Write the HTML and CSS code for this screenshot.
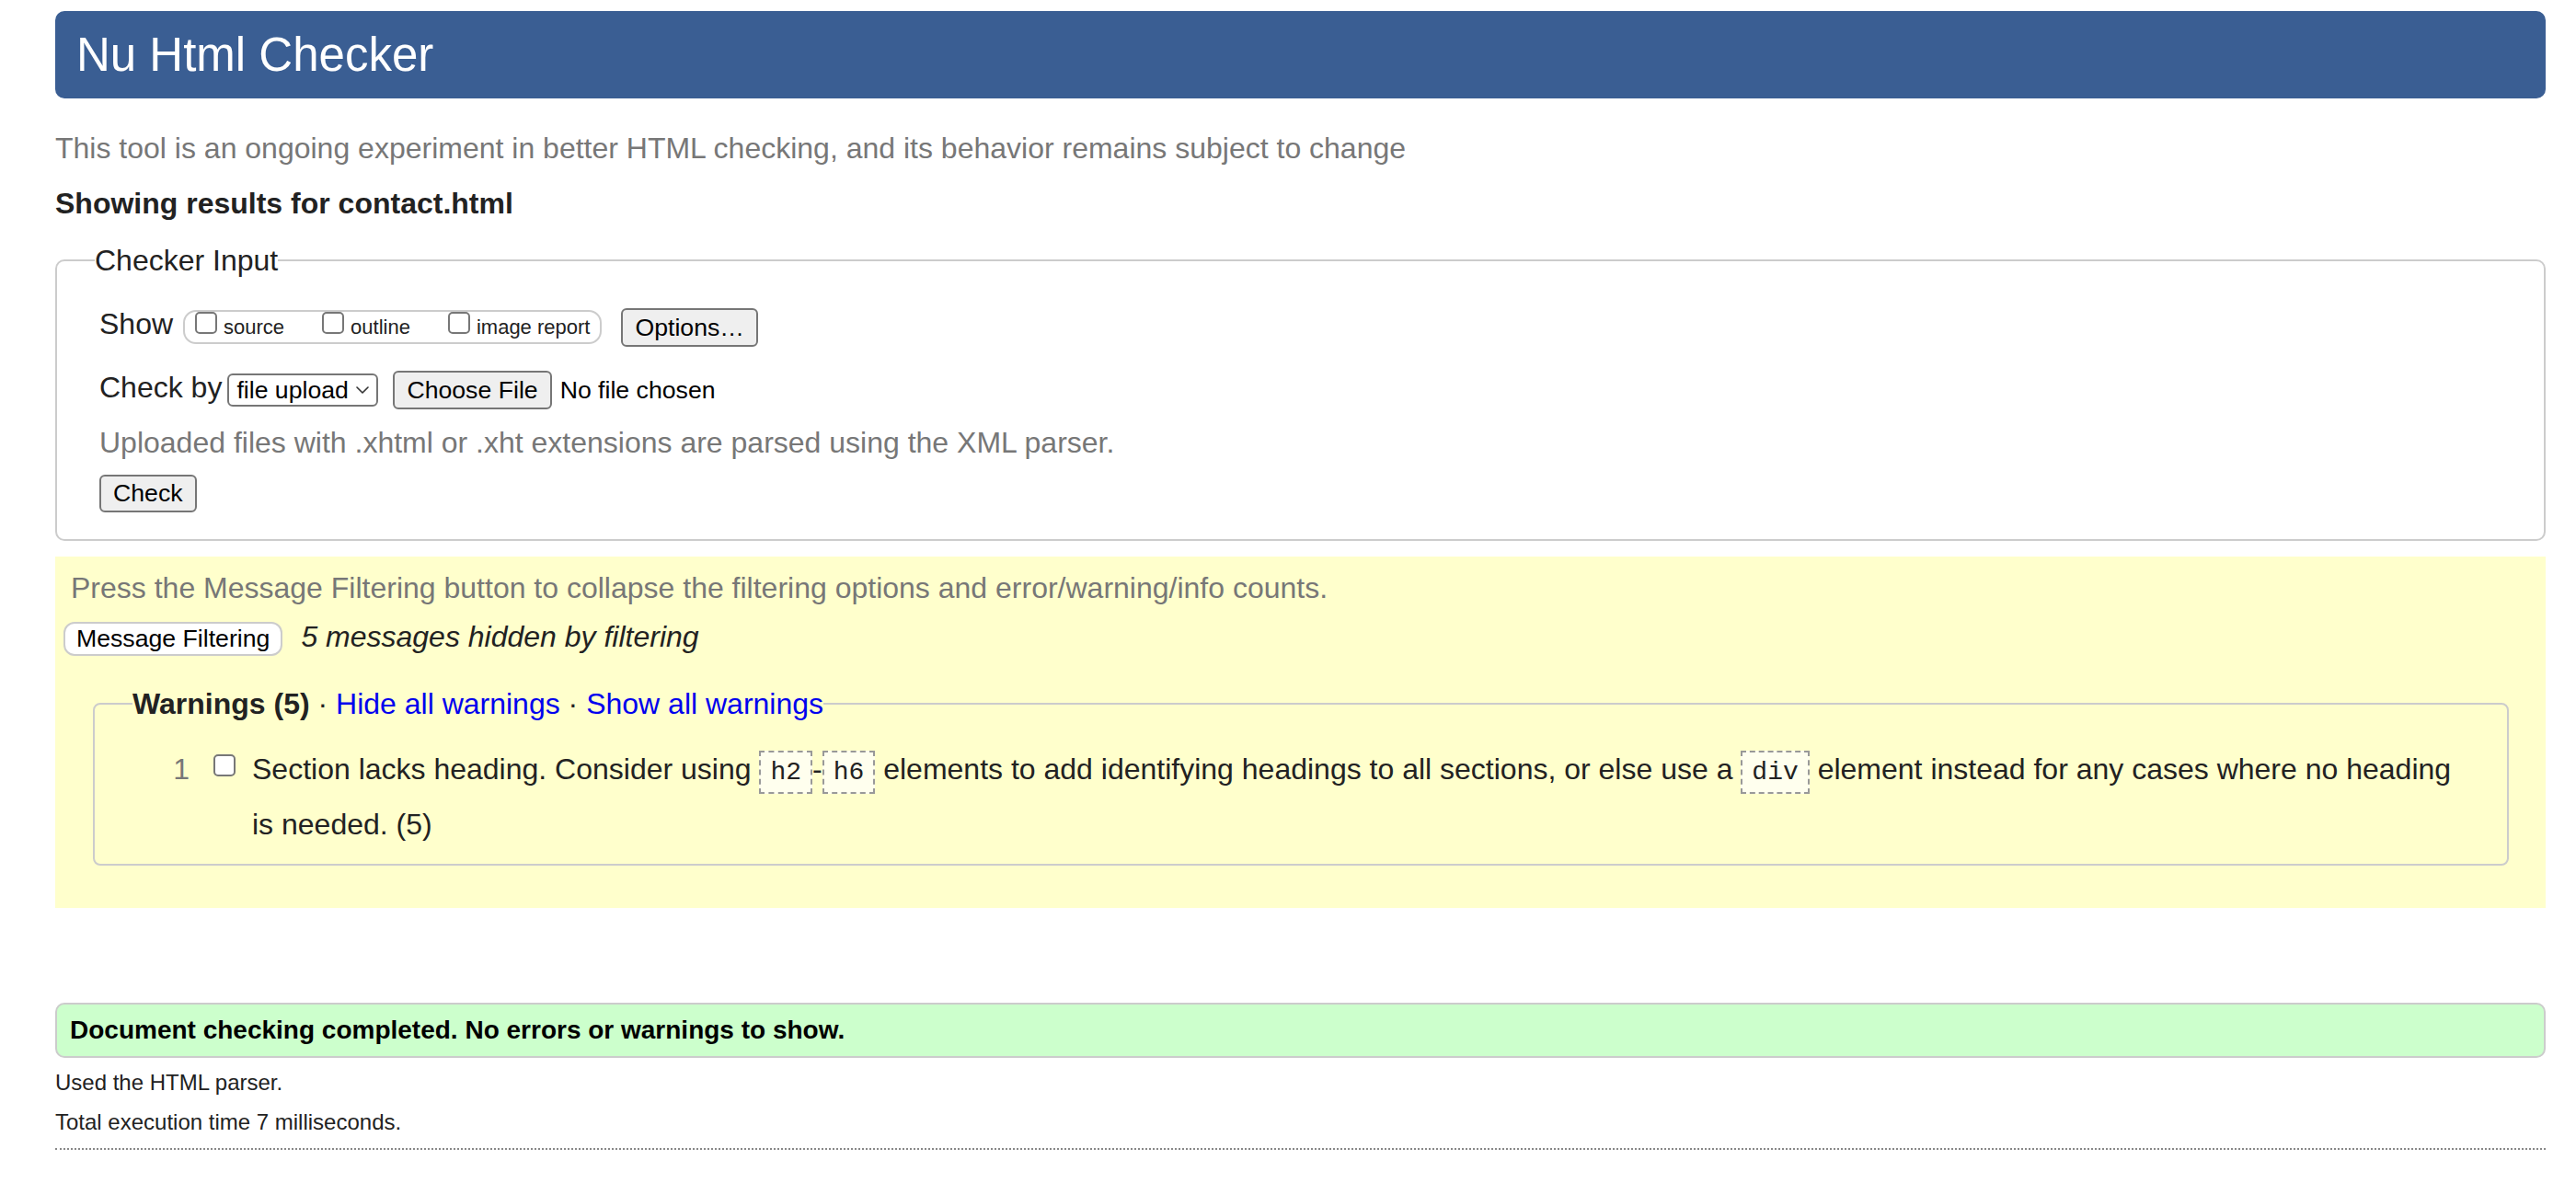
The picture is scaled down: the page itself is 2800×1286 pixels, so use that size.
FILE: index.html
```html
<!DOCTYPE html>
<html lang="en">
<head>
<meta charset="utf-8">
<title>Nu Html Checker</title>
<link rel="stylesheet" href="styles.css">
</head>
<body>
<h1 class="title">Nu Html Checker</h1>
<p class="intro">This tool is an ongoing experiment in better HTML checking, and its behavior remains subject to change</p>
<p class="results-for">Showing results for contact.html</p>
<form class="checker-form">
  <fieldset class="input-box">
    <legend class="input-legend">Checker Input</legend>
    <div class="input-body">
      <div class="row row-show">
        <span class="row-label label-show">Show</span>
        <span class="show-group">
          <label class="opt"><input type="checkbox" class="cb"><span class="opt-text">source</span></label>
          <label class="opt"><input type="checkbox" class="cb"><span class="opt-text">outline</span></label>
          <label class="opt"><input type="checkbox" class="cb"><span class="opt-text">image report</span></label>
        </span>
        <button type="button" class="btn btn-options">Options…</button>
      </div>
      <div class="row row-checkby">
        <span class="row-label label-checkby">Check by</span>
        <span class="select-wrap">
          <select class="select"><option>file upload</option></select>
          <svg class="chev" viewBox="0 0 14 8" width="14" height="8"><path d="M1 1 L7 7 L13 1" fill="none" stroke="#333" stroke-width="1.6" stroke-linecap="round" stroke-linejoin="round"/></svg>
        </span>
        <button type="button" class="btn btn-file">Choose File</button>
        <span class="file-status">No file chosen</span>
      </div>
      <p class="hint">Uploaded files with .xhtml or .xht extensions are parsed using the XML parser.</p>
      <button type="button" class="btn btn-check">Check</button>
    </div>
  </fieldset>
</form>
<section class="filters">
  <p class="filter-hint">Press the Message Filtering button to collapse the filtering options and error/warning/info counts.</p>
  <div class="filter-row">
    <button type="button" class="btn-filter">Message Filtering</button>
    <em class="hidden-count">5 messages hidden by filtering</em>
  </div>
  <fieldset class="warn-box">
    <legend class="warn-legend"><strong>Warnings (5)</strong> · <a href="#" class="warn-link">Hide all warnings</a> · <a href="#" class="warn-link">Show all warnings</a></legend>
    <ol class="warn-list">
      <li class="warn-item"><span class="warn-num">1</span><input type="checkbox" class="cb warn-cb"><span class="warn-text">Section lacks heading. Consider using <code class="code">h2</code>-<code class="code">h6</code> elements to add identifying headings to all sections, or else use a <code class="code">div</code> element instead for any cases where no heading is needed. (5)</span></li>
    </ol>
  </fieldset>
</section>
<div class="success">Document checking completed. No errors or warnings to show.</div>
<p class="meta meta-first">Used the HTML parser.</p>
<p class="meta">Total execution time 7 milliseconds.</p>
<hr class="end-rule">
</body>
</html>
```

FILE: styles.css
```css
html {
  background: #fff;
}

body {
  margin: 0 33px 0 60px;
  font-family: "Liberation Sans", Arial, Helvetica, sans-serif;
  font-size: 32px;
  line-height: 40px;
  color: #222;
}

.title {
  margin: 12px 0 0;
  height: 95px;
  box-sizing: border-box;
  padding: 0 23px;
  background: #3a5e93;
  color: #fff;
  font-size: 51px;
  font-weight: normal;
  line-height: 95px;
  border-radius: 10px;
}

.intro {
  margin: 34px 0 0;
  color: #777;
}

.results-for {
  margin: 20px 0 0;
  font-weight: bold;
}

.checker-form {
  margin: 0;
}

.input-box {
  margin: 22px 0 0;
  min-width: 0;
  border: 2px solid #ccc;
  border-radius: 10px;
  padding: 32px 0 29px 41px;
}

.input-legend {
  padding: 0;
  font-size: 32px;
  line-height: 40px;
  color: #222;
}

.input-body {
  padding-left: 5px;
}

.row {
  display: flex;
  align-items: flex-start;
}

.row-label {
  flex: none;
}

.label-show {
  margin-top: -3px;
}

.show-group {
  display: flex;
  align-items: flex-start;
  height: 37px;
  box-sizing: border-box;
  border: 2px solid #ccc;
  border-radius: 14px;
  padding: 0 11px;
  margin: 2px 0 0 11px;
}

.opt {
  display: flex;
  align-items: flex-start;
  font-size: 22px;
  line-height: 26px;
  color: #222;
}

.opt + .opt {
  margin-left: 41px;
}

.cb {
  appearance: none;
  -webkit-appearance: none;
  flex: none;
  width: 24px;
  height: 24px;
  margin: 0;
  box-sizing: border-box;
  border: 2px solid #777;
  border-radius: 5px;
  background: #fff;
}

.opt-text {
  margin: 4px 0 0 7px;
}

.btn {
  display: inline-block;
  height: 42px;
  box-sizing: border-box;
  padding: 0 13px;
  border: 2px solid #767676;
  border-radius: 6px;
  background: #efefef;
  color: #000;
  font-family: "Liberation Sans", Arial, Helvetica, sans-serif;
  font-size: 26.67px;
  line-height: 1;
}

.btn-options {
  margin-left: 21px;
}

.row-checkby {
  margin-top: 26px;
}

.label-checkby {
  margin-top: -2px;
}

.select-wrap {
  position: relative;
  display: block;
  margin: 3px 0 0 6px;
  height: 36px;
}

.select {
  appearance: none;
  -webkit-appearance: none;
  display: block;
  width: 164px;
  height: 36px;
  box-sizing: border-box;
  margin: 0;
  padding: 0 0 0 8px;
  border: 2px solid #767676;
  border-radius: 6px;
  background: #fff;
  color: #000;
  font-family: "Liberation Sans", Arial, Helvetica, sans-serif;
  font-size: 26.67px;
}

.chev {
  position: absolute;
  right: 10px;
  top: 14px;
  pointer-events: none;
}

.btn-file {
  margin-left: 16px;
}

.file-status {
  margin-left: 9px;
  font-size: 26.67px;
  line-height: 42px;
  color: #000;
}

.hint {
  margin: 16px 0 0;
  color: #777;
}

.btn-check {
  display: block;
  margin-top: 15px;
  height: 41px;
}

.filters {
  margin-top: 17px;
  background: #ffc;
  padding: 14px 40px 46px 9px;
}

.filter-hint {
  margin: 0;
  padding-left: 8px;
  color: #777;
}

.filter-row {
  display: flex;
  align-items: flex-start;
  margin-top: 17px;
}

.btn-filter {
  flex: none;
  height: 37px;
  box-sizing: border-box;
  padding: 0 12px;
  border: 2px solid #ccc;
  border-radius: 12px;
  background: #fff;
  color: #000;
  font-family: "Liberation Sans", Arial, Helvetica, sans-serif;
  font-size: 26.67px;
  line-height: 1;
}

.hidden-count {
  margin: -4px 0 0 20px;
  font-style: italic;
  color: #222;
}

.warn-box {
  margin: 32px 0 0 32px;
  min-width: 0;
  border: 2px solid #ccc;
  border-radius: 8px;
  padding: 23px 0 14px 41px;
}

.warn-legend {
  padding: 0;
  line-height: 40px;
  color: #222;
}

.warn-link {
  color: #00e;
  text-decoration: none;
}

.warn-list {
  margin: 0;
  padding: 0;
  list-style: none;
}

.warn-item {
  display: flex;
  align-items: flex-start;
}

.warn-num {
  flex: none;
  width: 62px;
  text-align: right;
  color: #777;
  line-height: 57px;
}

.warn-cb {
  margin: 12px 0 0 26px;
}

.warn-text {
  margin-left: 18px;
  padding-right: 36px;
  line-height: 57px;
  color: #222;
}

.code {
  font-family: "Liberation Mono", "Courier New", monospace;
  font-size: 28px;
  padding: 6px 10px;
  border: 2px dashed #999;
  background: #ffffee;
  color: #222;
}

.success {
  margin-top: 103px;
  height: 60px;
  box-sizing: border-box;
  padding: 0 14px;
  border: 2px solid #ccc;
  border-radius: 10px;
  background: #cfc;
  color: #000;
  font-size: 28px;
  font-weight: bold;
  line-height: 56px;
}

.meta {
  margin: 0;
  font-size: 24px;
  line-height: 43px;
  color: #222;
}

.meta-first {
  margin-top: 5px;
}

.end-rule {
  margin: 7px 0 0;
  height: 0;
  border: 0;
  border-top: 2px dotted #888;
}
```
